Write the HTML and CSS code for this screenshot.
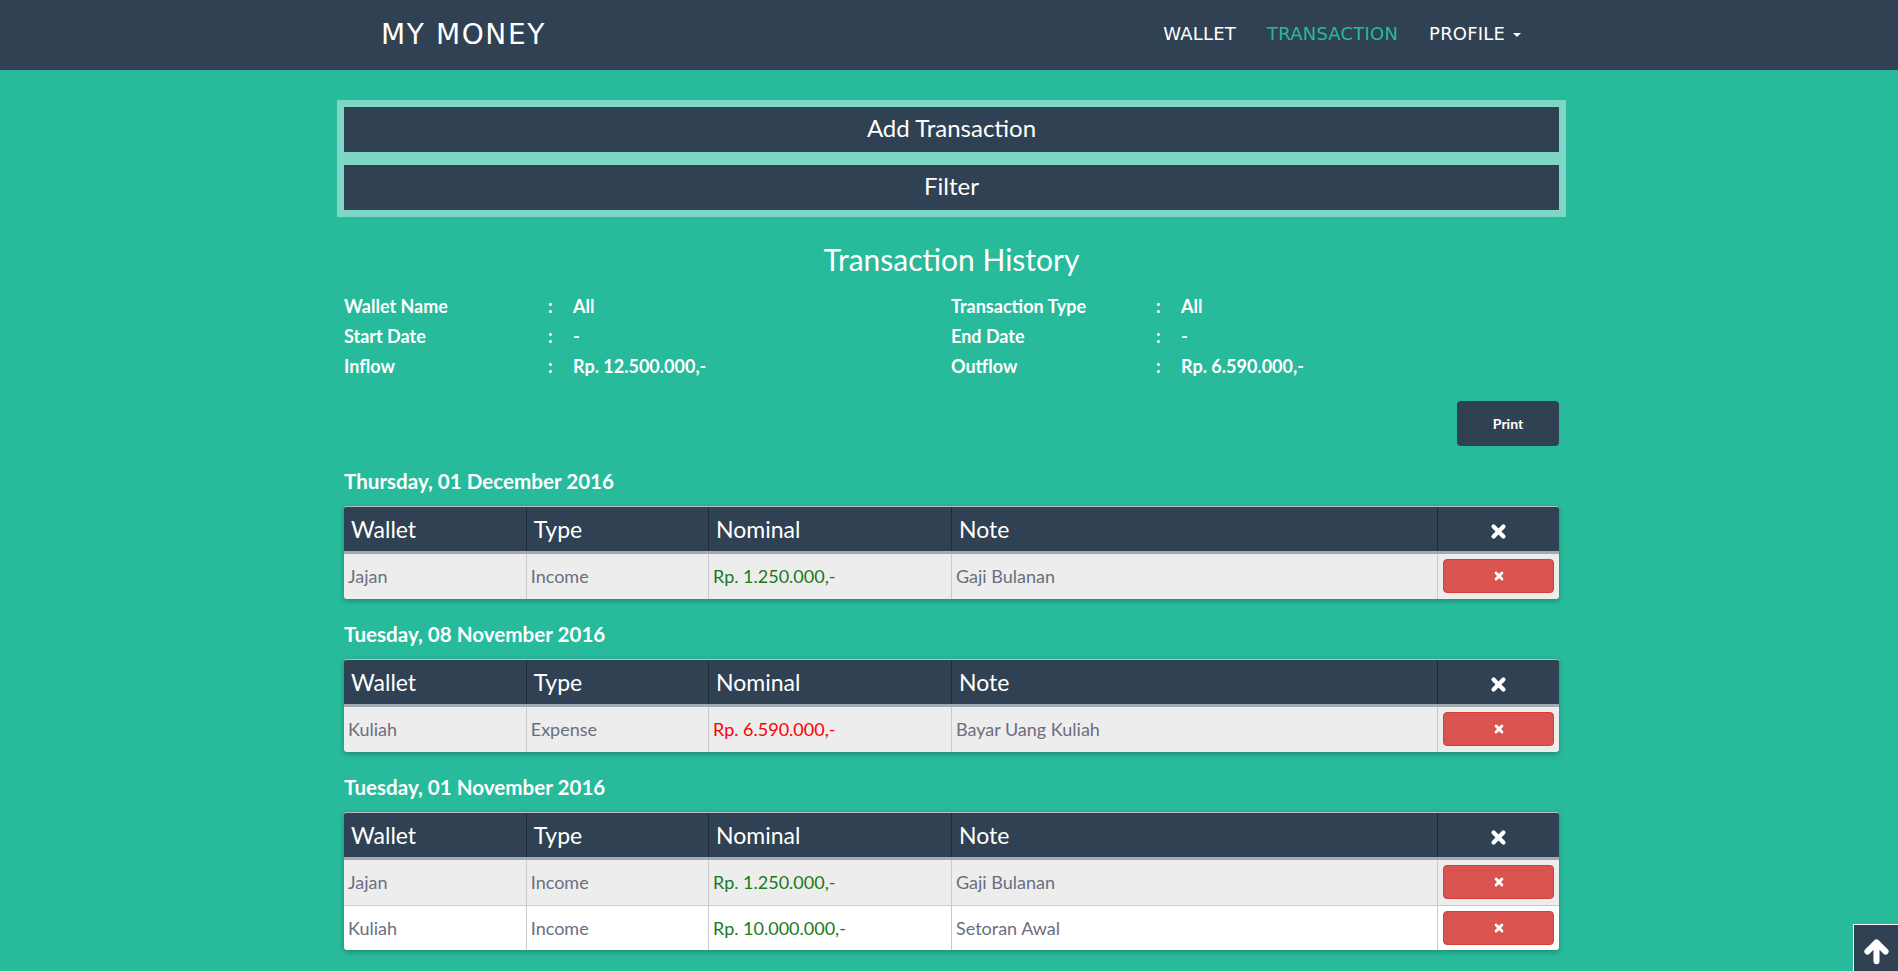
FILE: index.html
```html
<!DOCTYPE html>
<html lang="en">
<head>
<meta charset="utf-8">
<title>My Money - Transaction</title>
<link rel="stylesheet" href="styles.css">
</head>
<body>
<nav class="navbar">
  <div class="nav-inner">
    <a class="brand" href="#">MY MONEY</a>
    <ul class="nav-links">
      <li><a href="#">WALLET</a></li>
      <li class="active"><a href="#">TRANSACTION</a></li>
      <li><a href="#">PROFILE <span class="caret"></span></a></li>
    </ul>
  </div>
</nav>

<main class="main">
  <div class="action-box">
    <button class="action-btn">Add Transaction</button>
    <button class="action-btn">Filter</button>
  </div>

  <h2 class="title">Transaction History</h2>

  <div class="info">
    <div class="info-label">Wallet Name</div><div class="info-colon">:</div><div class="info-value">All</div>
    <div class="info-label">Transaction Type</div><div class="info-colon">:</div><div class="info-value">All</div>
    <div class="info-label">Start Date</div><div class="info-colon">:</div><div class="info-value">-</div>
    <div class="info-label">End Date</div><div class="info-colon">:</div><div class="info-value">-</div>
    <div class="info-label">Inflow</div><div class="info-colon">:</div><div class="info-value">Rp. 12.500.000,-</div>
    <div class="info-label">Outflow</div><div class="info-colon">:</div><div class="info-value">Rp. 6.590.000,-</div>
  </div>

  <div class="print-row"><button class="print-btn">Print</button></div>

  <section class="day">
    <h3 class="day-title">Thursday, 01 December 2016</h3>
    <div class="table-wrap">
      <table class="tx">
        <colgroup><col class="c15"><col class="c15"><col class="c20"><col class="c40"><col class="c10"></colgroup>
        <thead><tr><th>Wallet</th><th>Type</th><th>Nominal</th><th>Note</th><th class="th-x"><svg class="x-big" viewBox="0 0 24 24"><path d="M5 5 L19 19 M19 5 L5 19"/></svg></th></tr></thead>
        <tbody>
          <tr class="odd"><td>Jajan</td><td>Income</td><td class="in">Rp. 1.250.000,-</td><td>Gaji Bulanan</td><td class="td-del"><button class="del-btn"><svg class="x-small" viewBox="0 0 24 24"><path d="M5 5 L19 19 M19 5 L5 19"/></svg></button></td></tr>
        </tbody>
      </table>
    </div>
  </section>

  <section class="day">
    <h3 class="day-title">Tuesday, 08 November 2016</h3>
    <div class="table-wrap">
      <table class="tx">
        <colgroup><col class="c15"><col class="c15"><col class="c20"><col class="c40"><col class="c10"></colgroup>
        <thead><tr><th>Wallet</th><th>Type</th><th>Nominal</th><th>Note</th><th class="th-x"><svg class="x-big" viewBox="0 0 24 24"><path d="M5 5 L19 19 M19 5 L5 19"/></svg></th></tr></thead>
        <tbody>
          <tr class="odd"><td>Kuliah</td><td>Expense</td><td class="out">Rp. 6.590.000,-</td><td>Bayar Uang Kuliah</td><td class="td-del"><button class="del-btn"><svg class="x-small" viewBox="0 0 24 24"><path d="M5 5 L19 19 M19 5 L5 19"/></svg></button></td></tr>
        </tbody>
      </table>
    </div>
  </section>

  <section class="day">
    <h3 class="day-title">Tuesday, 01 November 2016</h3>
    <div class="table-wrap">
      <table class="tx">
        <colgroup><col class="c15"><col class="c15"><col class="c20"><col class="c40"><col class="c10"></colgroup>
        <thead><tr><th>Wallet</th><th>Type</th><th>Nominal</th><th>Note</th><th class="th-x"><svg class="x-big" viewBox="0 0 24 24"><path d="M5 5 L19 19 M19 5 L5 19"/></svg></th></tr></thead>
        <tbody>
          <tr class="odd"><td>Jajan</td><td>Income</td><td class="in">Rp. 1.250.000,-</td><td>Gaji Bulanan</td><td class="td-del"><button class="del-btn"><svg class="x-small" viewBox="0 0 24 24"><path d="M5 5 L19 19 M19 5 L5 19"/></svg></button></td></tr>
          <tr class="even"><td>Kuliah</td><td>Income</td><td class="in">Rp. 10.000.000,-</td><td>Setoran Awal</td><td class="td-del"><button class="del-btn"><svg class="x-small" viewBox="0 0 24 24"><path d="M5 5 L19 19 M19 5 L5 19"/></svg></button></td></tr>
        </tbody>
      </table>
    </div>
  </section>
</main>

<a class="to-top" href="#"><svg viewBox="0 0 24 24"><path d="M12 20 V5 M4.5 12 L12 4.5 L19.5 12"/></svg></a>
</body>
</html>
```

FILE: styles.css
```css
* { box-sizing: border-box; }

html, body {
  margin: 0;
  padding: 0;
}

body {
  background: #27ba9b;
  font-family: Lato, "Open Sans", sans-serif;
  color: #fff;
  min-height: 971px;
}

/* NAVBAR */
.navbar {
  height: 70px;
  background: #2f4152;
}

.nav-inner {
  width: 1142px;
  margin-left: calc(50% - 570px);
  height: 70px;
  display: flex;
  align-items: center;
  justify-content: space-between;
}

.brand {
  font-family: "DejaVu Sans", sans-serif;
  font-size: 28px;
  letter-spacing: 1.6px;
  color: #fff;
  text-decoration: none;
  padding-left: 2px;
  line-height: 1;
}

.nav-links {
  list-style: none;
  margin: 0;
  padding: 0;
  display: flex;
  gap: 31px;
  margin-top: -3px;
}

.nav-links a {
  font-family: "DejaVu Sans", sans-serif;
  font-size: 18px;
  color: #fff;
  text-decoration: none;
  letter-spacing: 0.2px;
}

.nav-links .active a { color: #27ba9b; }

.caret {
  display: inline-block;
  width: 0;
  height: 0;
  margin-left: 2px;
  vertical-align: middle;
  border-top: 4px solid #fff;
  border-left: 4px solid transparent;
  border-right: 4px solid transparent;
}

/* MAIN */
.main {
  width: 1215px;
  margin-left: calc(50% - 605px);
  padding-bottom: 40px;
}

.action-box {
  margin: 30px -7px 0;
  background: #7dd7c4;
  padding: 7px;
  display: flex;
  flex-direction: column;
  gap: 13px;
}

.action-btn {
  height: 45px;
  border: 0;
  background: #2f4152;
  color: #fff;
  font-family: Lato, sans-serif;
  font-size: 24px;
  padding: 0 0 4px;
  cursor: pointer;
}

.title {
  margin: 26px 0 0;
  text-align: center;
  font-weight: 400;
  font-size: 30px;
  line-height: 33px;
}

.info {
  margin-top: 15px;
  display: grid;
  grid-template-columns: 204px 25px 378px 205px 25px auto;
  grid-auto-rows: 30px;
  align-items: center;
  font-weight: 700;
  font-size: 18px;
}

.print-row {
  margin-top: 20px;
  display: flex;
  justify-content: flex-end;
}

.print-btn {
  width: 102px;
  height: 45px;
  background: #2f4152;
  color: #fff;
  border: 0;
  border-radius: 4px;
  font-family: Lato, sans-serif;
  font-weight: 700;
  font-size: 14px;
}

.day-title {
  margin: 25px 0 15px;
  font-size: 20.6px;
  line-height: 20px;
  font-weight: 700;
}

.table-wrap {
  border-radius: 3px;
  overflow: hidden;
  box-shadow: 0 2px 5px rgba(0, 0, 0, 0.25);
  border-top: 1px solid #b8bfc5;
}

.tx {
  width: 100%;
  border-collapse: collapse;
  table-layout: fixed;
}

.c15 { width: 15%; }
.c20 { width: 20%; }
.c40 { width: 40%; }
.c10 { width: 10%; }

.tx th {
  height: 45px;
  background: #2f4152;
  color: #fff;
  text-align: left;
  font-weight: 400;
  font-size: 23px;
  padding: 0 7px;
  border-left: 1px solid #1f2c38;
  border-bottom: 3px solid #a3abb2;
}

.tx th:first-child { border-left: 0; }

.tx th.th-x { text-align: center; }

.x-big {
  width: 17px;
  height: 17px;
  vertical-align: middle;
  fill: none;
  stroke: #fff;
  stroke-width: 6;
  stroke-linecap: round;
}

.tx td {
  height: 47px;
  padding: 0 4px;
  font-size: 18px;
  color: #6b6e7f;
  border-left: 1px solid #c8c9d1;
  border-top: 1px solid #c8c9d1;
}

.tx tbody tr + tr td { height: 45px; }

.tx td:first-child { border-left: 0; }
.tx tbody tr:first-child td { border-top: 0; }

.tx tr.odd td { background: #ededed; }
.tx tr.even td { background: #fff; }

.tx td.in { color: #1a7a1a; }
.tx td.out { color: #ff0000; }

.tx td.td-del { padding: 0 5px; }

.del-btn {
  display: flex;
  align-items: center;
  justify-content: center;
  width: 100%;
  height: 34px;
  background: #d9534f;
  border: 1px solid #d43f3a;
  border-radius: 4px;
  padding: 0;
}

.x-small {
  width: 10px;
  height: 10px;
  fill: none;
  stroke: #fff;
  stroke-width: 7;
  stroke-linecap: round;
}

/* SCROLL TO TOP */
.to-top {
  position: fixed;
  right: 0;
  bottom: 0;
  width: 45px;
  height: 47px;
  background: #2f4152;
  border-top: 1px solid #fff;
  border-left: 1px solid #fff;
  display: flex;
  align-items: flex-start;
  justify-content: center;
  padding-top: 12px;
}

.to-top svg {
  width: 29px;
  height: 29px;
  fill: none;
  stroke: #fff;
  stroke-width: 5;
  stroke-linecap: round;
  stroke-linejoin: round;
}
```
